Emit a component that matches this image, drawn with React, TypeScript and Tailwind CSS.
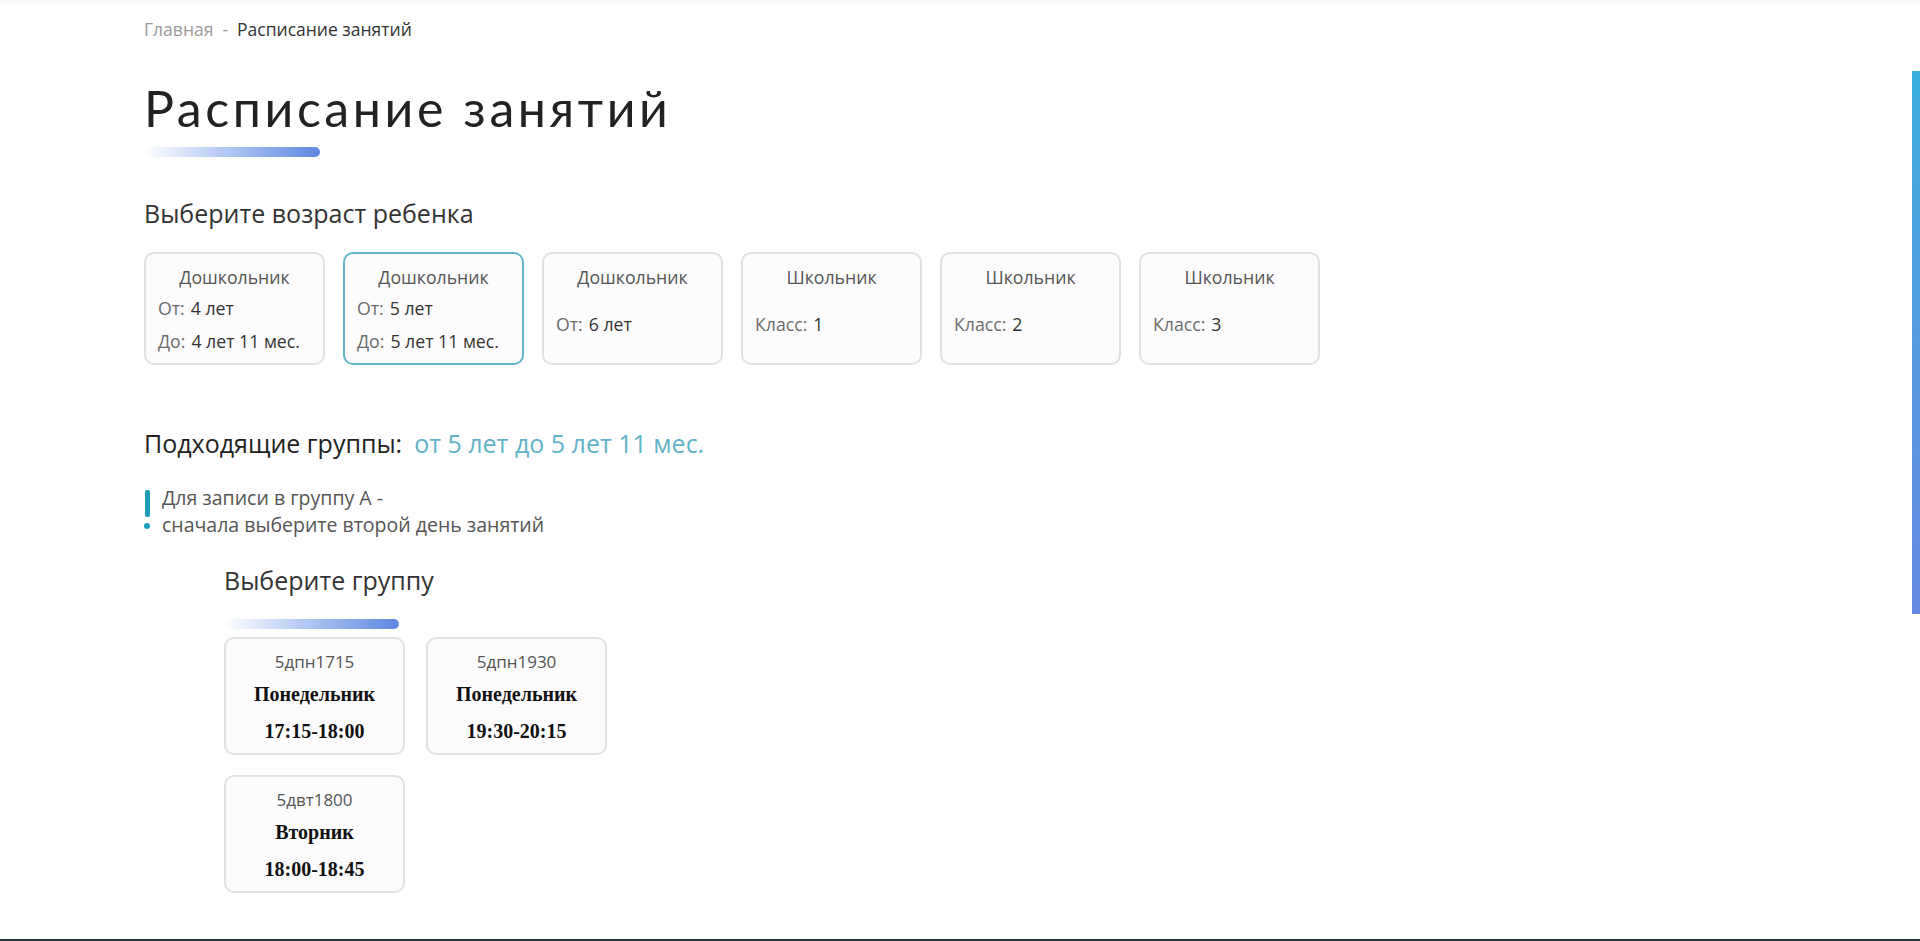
import React, { useState } from 'react';

interface AgeOption {
  title: string;
  from?: string;
  to?: string;
  grade?: string;
}

interface GroupOption {
  code: string;
  day: string;
  time: string;
}

const ages: AgeOption[] = [
  { title: 'Дошкольник', from: '4 лет', to: '4 лет 11 мес.' },
  { title: 'Дошкольник', from: '5 лет', to: '5 лет 11 мес.' },
  { title: 'Дошкольник', from: '6 лет' },
  { title: 'Школьник', grade: '1' },
  { title: 'Школьник', grade: '2' },
  { title: 'Школьник', grade: '3' },
];

const groups: GroupOption[] = [
  { code: '5дпн1715', day: 'Понедельник', time: '17:15-18:00' },
  { code: '5дпн1930', day: 'Понедельник', time: '19:30-20:15' },
  { code: '5двт1800', day: 'Вторник', time: '18:00-18:45' },
];

const Line: React.FC<{ label: string; value: string }> = ({ label, value }) => (
  <div className="leading-[33px] whitespace-nowrap">
    <span className="text-[#6b6b6b]">{label}</span>
    <span className="ml-[6px] text-[#333]">{value}</span>
  </div>
);

const App: React.FC = () => {
  const [selected, setSelected] = useState(1);

  return (
    <div className="min-h-[941px] bg-white flex flex-col font-['Open_Sans',sans-serif] text-[#333]">
      {/* header shadow + custom scroll thumb */}
      <div className="fixed top-0 left-0 right-0 h-[6px] bg-gradient-to-b from-black/[0.04] to-transparent pointer-events-none" />
      <div className="fixed right-0 top-[71px] w-[8px] h-[543px] bg-gradient-to-b from-[#3aaedb] to-[#6687e1]" />

      <main className="flex-1 pl-[144px] pt-[17px] pb-[44px]">
        {/* Breadcrumbs */}
        <nav className="text-[17.5px] leading-[24px] whitespace-nowrap">
          <span className="text-[#9a9a9a]">Главная</span>
          <span className="text-[#9a9a9a] mx-[9px]">-</span>
          <span className="text-[#333]">Расписание занятий</span>
        </nav>

        <h1 className="mt-[39px] font-['Lato',sans-serif] text-[50px] leading-[56px] font-normal tracking-[3.6px] text-[#222] whitespace-nowrap">
          Расписание занятий
        </h1>
        <div className="mt-[11px] w-[176px] h-[10px] rounded-full bg-gradient-to-r from-white to-[#5f87e0]" />

        <h2 className="mt-[41px] text-[25px] leading-[30px] text-[#333]">Выберите возраст ребенка</h2>

        <div className="mt-[24px] flex gap-[18px]">
          {ages.map((a, i) => (
            <button
              key={i}
              onClick={() => setSelected(i)}
              className={`w-[181px] h-[113px] rounded-[10px] border-2 bg-[#fcfcfc] flex flex-col text-left text-[17.7px] px-[12px] pb-[3px] ${
                selected === i ? 'border-[#62b6c9]' : 'border-[#e1e1e1]'
              }`}
            >
              <div className="pt-[11px] leading-[24px] text-center text-[#555] w-full">{a.title}</div>
              <div className="flex-1 flex flex-col justify-center">
                {a.from && <Line label="От:" value={a.from} />}
                {a.to && <Line label="До:" value={a.to} />}
                {a.grade && <Line label="Класс:" value={a.grade} />}
              </div>
            </button>
          ))}
        </div>

        <div className="mt-[63px] text-[25px] leading-[30px] flex gap-[12px] whitespace-nowrap">
          <span className="text-[#222]">Подходящие группы:</span>
          <span className="text-[#62b3c9]">от 5 лет до 5 лет 11 мес.</span>
        </div>

        <div className="mt-[26px] flex items-start">
          <div className="w-[6px] pt-[6px] flex flex-col items-center">
            <div className="w-[5px] h-[27px] rounded-[2px] bg-[#1c9db9]" />
            <div className="mt-[6px] w-[6px] h-[6px] rounded-full bg-[#1c9db9]" />
          </div>
          <p className="ml-[12px] text-[19.5px] leading-[27px] text-[#555] whitespace-nowrap">
            Для записи в группу А -
            <br />
            сначала выберите второй день занятий
          </p>
        </div>

        <section className="ml-[80px] mt-[27px]">
          <h3 className="text-[25px] leading-[30px] text-[#333]">Выберите группу</h3>
          <div className="mt-[24px] w-[175px] h-[10px] rounded-full bg-gradient-to-r from-white to-[#5f87e0]" />
          <div className="mt-[8px] w-[400px] flex flex-wrap gap-x-[21px] gap-y-[20px]">
            {groups.map((g) => (
              <div
                key={g.code}
                className="w-[181px] h-[118px] rounded-[10px] border-2 border-[#e1e1e1] bg-[#fcfcfc] flex flex-col items-center pt-[11px]"
              >
                <div className="text-[17px] leading-[24px] text-[#555]">{g.code}</div>
                <div className="mt-[8px] font-['Liberation_Serif',serif] font-bold text-[20px] leading-[24px] text-[#111]">
                  {g.day}
                </div>
                <div className="mt-[13px] font-['Liberation_Serif',serif] font-bold text-[20px] leading-[24px] text-[#111]">
                  {g.time}
                </div>
              </div>
            ))}
          </div>
        </section>
      </main>

      <footer className="h-[2px] bg-[#22323f]" />
    </div>
  );
};

export default App;
